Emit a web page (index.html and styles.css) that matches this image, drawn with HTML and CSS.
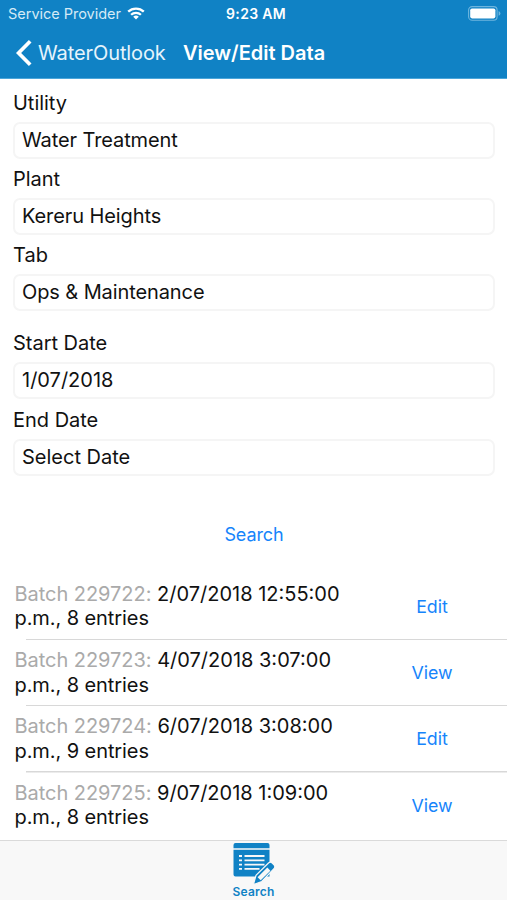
FILE: index.html
```html
<!DOCTYPE html>
<html lang="en">
<head>
<meta charset="utf-8">
<title>View/Edit Data</title>
<link rel="stylesheet" href="styles.css">
</head>
<body>
<div class="app">
  <header class="header">
    <div class="status">
      <div class="carrier"><span class="carrier-name">Service Provider</span>
        <svg class="wifi" viewBox="0 0 18 13" width="18" height="13"><g fill="none" stroke="#fff" stroke-width="2.3"><path d="M1.2 4.7a11.2 11.2 0 0 1 15.6 0"/><path d="M4.1 7.8a7 7 0 0 1 9.8 0"/></g><path fill="#fff" d="M9 12.6 6.2 9.8a4 4 0 0 1 5.6 0z"/></svg>
      </div>
      <span class="clock">9:23 AM</span>
      <svg class="battery" viewBox="0 0 33 15" width="33" height="15"><rect x=".6" y=".6" width="28.5" height="13.6" rx="3.5" fill="none" stroke="#6db5de" stroke-width="1.1"/><rect x="2.2" y="2.4" width="25.2" height="10" rx="1.8" fill="#fff"/><path d="M30.6 5.1q1.8.7 1.8 2.3t-1.8 2.3z" fill="#6db5de"/></svg>
    </div>
    <nav class="nav">
      <svg class="back" viewBox="0 0 17 26" width="17" height="26"><path d="M15.200 1.300 3.600 13l11.600 11.700" fill="none" stroke="#fff" stroke-width="3.7"/></svg>
      <span class="back-label">WaterOutlook</span>
      <h1 class="title">View/Edit Data</h1>
    </nav>
  </header>
  <main class="content">
    <div class="form">
      <div class="field"><div class="label">Utility</div><div class="input">Water Treatment</div></div>
      <div class="field"><div class="label">Plant</div><div class="input">Kereru Heights</div></div>
      <div class="field"><div class="label">Tab</div><div class="input">Ops &amp; Maintenance</div></div>
      <div class="field dates"><div class="label">Start Date</div><div class="input plain">1/07/2018</div></div>
      <div class="field"><div class="label">End Date</div><div class="input plain">Select Date</div></div>
    </div>
    <div class="search">Search</div>
    <div class="list">
      <div class="row"><div class="entry"><div><span class="batch">Batch 229722:</span> <span class="stamp">2/07/2018 12:55:00</span></div><div class="count">p.m., 8 entries</div></div><span class="action">Edit</span></div>
      <div class="row"><div class="entry"><div><span class="batch">Batch 229723:</span> <span class="stamp">4/07/2018 3:07:00</span></div><div class="count">p.m., 8 entries</div></div><span class="action">View</span></div>
      <div class="row"><div class="entry"><div><span class="batch">Batch 229724:</span> <span class="stamp">6/07/2018 3:08:00</span></div><div class="count">p.m., 9 entries</div></div><span class="action">Edit</span></div>
      <div class="row"><div class="entry"><div><span class="batch">Batch 229725:</span> <span class="stamp">9/07/2018 1:09:00</span></div><div class="count">p.m., 8 entries</div></div><span class="action">View</span></div>
    </div>
  </main>
  <footer class="tabbar">
    <svg class="tab-icon" viewBox="0 0 42 42" width="42" height="42">
      <path fill="#1082c5" d="M2.500 0h32Q36.500 0 36.500 2v3.200H.5V2Q.5 0 2.500 0zM.5 6.700h36V33.500H2.500Q.5 33.500 .5 31.500z"/>
      <path d="M6 13h3M11.500 13h20M6 17.300h3M11.500 17.300h20M6 21.600h3M11.500 21.600h20M6 25.900h3M11.500 25.900h15" stroke="#f8f8f8" stroke-width="1.800"/>
      <path fill="#1082c5" stroke="#f8f8f8" stroke-width="1.200" d="m20.400 41.600 2.600-9.300L35.500 20q1.900-1.600 3.700.1l1.800 1.800q1.700 1.900 0 3.700L28.800 38.500z"/>
      <path fill="#f8f8f8" d="m24.600 34.300 9.700-9.700 3.100 3.100-9.700 9.600z"/>
    </svg>
    <span class="tab-label">Search</span>
  </footer>
</div>
</body>
</html>
```
FILE: styles.css
```css
* { box-sizing: border-box; }
body { margin: 0; background: #fff; color: #111; font: 20px/24px Inter, "Liberation Sans", sans-serif; }
.app { width: 507px; height: 900px; display: flex; flex-direction: column; overflow: hidden; white-space: nowrap; }
.header { height: 79px; flex: none; background: #1082c5; color: #fff; border-bottom: 1px solid #4ba6da; }
.status { height: 27px; display: grid; grid-template-columns: 1fr auto 1fr; align-items: center; padding: 0 6px 0 8px; font-size: 14.5px; line-height: 27px; }
.carrier { display: flex; align-items: center; gap: 6px; color: #d5eaf6; }
.carrier-name { letter-spacing: -.02px; }
.clock { font-weight: 600; font-size: 14px; letter-spacing: .3px; padding-left: 3px; }
.battery { justify-self: end; }
.nav { height: 51px; display: flex; align-items: center; padding-left: 15px; }
.back-label { margin-left: 6px; width: 145px; color: #e6f4fc; letter-spacing: -.1px; }
.title { margin: 0; font-size: 20px; line-height: 24px; font-weight: 600; }
.content { height: 761px; flex: none; padding-top: 12px; overflow: hidden; }
.form { padding: 0 12px 0 13px; }
.field { height: 76.2px; }
.dates { margin-top: 11.800px; }
.label { height: 31px; line-height: 24px; letter-spacing: -.02px; }
.input { height: 37px; border: 2px solid #f5f5f5; border-radius: 7px; padding-left: 7px; line-height: 33px; letter-spacing: -.1px; }
.plain { letter-spacing: 0; }
.search { height: 24px; margin-top: 39.200px; padding-left: 1px; text-align: center; font-size: 18px; letter-spacing: -.1px; color: #1684fb; }
.list { padding-top: 26.700px; }
.row { height: 66.400px; padding: 8px 0 0 14.500px; display: flex; background: linear-gradient(#d8d8d8, #d8d8d8) 26px 100% / 100% 1.500px no-repeat; }
.row:last-child { background: none; }
.entry { width: 363.500px; line-height: 24.500px; }
.batch { color: #aaa; letter-spacing: -.04px; }
.count { letter-spacing: -.08px; }
.action { width: 108px; text-align: center; font-size: 17.800px; line-height: 50px; color: #1684fb; }
.tabbar { height: 60px; flex: none; background: #f8f8f8; border-top: 1px solid #dadada; display: flex; flex-direction: column; align-items: center; padding-top: 2px; }
.tab-icon { display: block; }
.tab-label { font-size: 12px; line-height: 14px; font-weight: 600; letter-spacing: .2px; color: #1082c5; }
```
